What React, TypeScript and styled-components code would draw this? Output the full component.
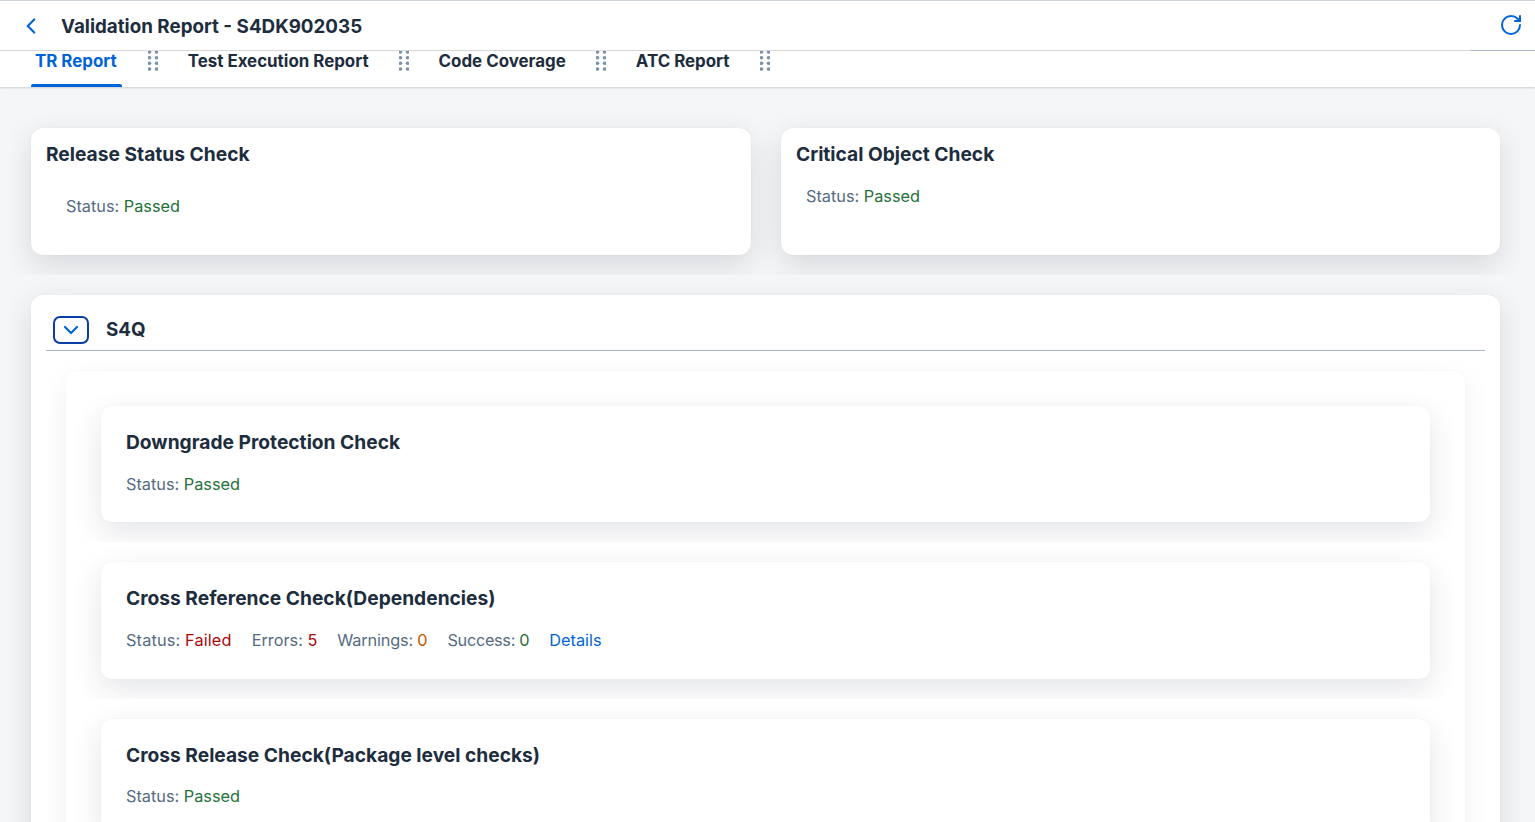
import React from "react";
import styled, { createGlobalStyle } from "styled-components";
import { ChevronDown, ChevronLeft, RotateCw } from "lucide-react";

const Global = createGlobalStyle`
  html, body { margin: 0; height: 100%; overflow: hidden; background: #f5f6f7; }
  body { font-family: Inter, "Noto Sans", Arial, sans-serif; color: #1d2d3e; }
  * { box-sizing: border-box; }
`;

const Page = styled.div`height: 822px; overflow: hidden; display: flex; flex-direction: column;`;

const Header = styled.header`
  position: relative;
  height: 51px;
  flex: none;
  background: #fff;
  border-top: 1px solid #ccd3d9;
  border-bottom: 1px solid #d9d9d9;
  display: flex;
  align-items: center;
  padding: 0 12px 0 18px;
  &::after {
    content: "";
    position: absolute;
    right: 0;
    bottom: -1px;
    width: 64px;
    height: 1px;
    background: #a9b8c9;
  }
`;
const BackButton = styled.span`width: 26px; display: flex; color: #0064d9; margin-right: 17px;`;
const Title = styled.h1`margin: 2px 0 0; flex: 1; font-size: 18.8px; line-height: 24px; font-weight: 700;`;
const Refresh = styled.span`display: flex; color: #0064d9; margin-bottom: 1px;`;

const TabBar = styled.nav`
  height: 36px;
  flex: none;
  background: #fff;
  box-shadow: 0 1px 2px rgba(29,45,62,.2);
  display: flex;
  gap: 26px;
  padding-left: 31px;
  position: relative;
  z-index: 2;
`;
const Tab = styled.div<{ $active?: boolean }>`
  position: relative;
  padding: 0 ${p => (p.$active ? 5 : 4)}px 0 4px;
  height: 36px;
  font-size: 16.9px;
  line-height: 20px;
  font-weight: 700;
  color: ${p => (p.$active ? "#0064d9" : "#1d2d3e")};
  ${p => p.$active && `
    &::after {
      content: "";
      position: absolute;
      left: 0;
      right: 0;
      bottom: 0;
      height: 3px;
      background: #0064d9;
      border-radius: 2px 2px 0 0;
    }
  `}
`;
const Grip = () => (
  <svg width="10" height="20" viewBox="0 0 10 20" fill="#7b91a8">
    {[1, 6.7, 12.3, 18].map(y => [1.5, 8.5].map(x => <circle key={`${x}-${y}`} cx={x} cy={y} r="1.8" />))}
  </svg>
);

const Content = styled.main`padding: 20.5px 15px 0 11px; flex: 1; display: flex; flex-direction: column;`;

const Clip = styled.div`overflow: hidden; padding: 20px;`;
const TopRow = styled(Clip)`display: grid; grid-template-columns: 720px 719px; gap: 30px;`;
const PanelClip = styled(Clip)`padding-bottom: 0; flex: 1;`;

const Card = styled.section`
  background: #fff;
  border-radius: 12px;
  box-shadow: 0 10px 30px rgba(29,45,62,.14), 0 0 1px rgba(29,45,62,.12);
`;
const TopCard = styled(Card)`height: 127.5px; padding: 14px 15px;`;
const TopTitle = styled.h2`margin: 0; font-size: 19.2px; line-height: 24px; font-weight: 700;`;
const StatusLine = styled.p<{ $left: number; $top: number }>`
  margin: ${p => p.$top}px 0 0 ${p => p.$left}px;
  font-size: 16.3px;
  line-height: 22px;
  color: #556b82;
  display: flex;
  gap: 20px;
`;
const Pair = styled.span<{ $tracking?: number }>`
  letter-spacing: ${p => p.$tracking ?? 0}px;
`;
const Value = styled.span<{ $tone: "good" | "bad" | "warn" }>`
  color: ${p => ({ good: "#256f3a", bad: "#aa0808", warn: "#c35500" }[p.$tone])};
`;
const DetailsLink = styled.a`color: #0064d9; text-decoration: none;`;

const Panel = styled(Card)`padding: 15px; min-height: 700px;`;
const PanelHead = styled.div`
  display: flex;
  align-items: center;
  height: 41px;
  padding: 0 0 0 7px;
  gap: 17px;
  border-bottom: 1px solid #a9b4be;
`;
const Toggle = styled.button`
  width: 36px;
  height: 28px;
  padding: 0;
  border: 2px solid #0a3ea5;
  border-radius: 7px;
  background: #fff;
  color: #0064d9;
  display: flex;
  align-items: center;
  justify-content: center;
`;
const PanelName = styled.h3`margin: 0; font-size: 18.8px; line-height: 24px; font-weight: 700;`;
const InnerClip = styled(Clip)`padding-bottom: 0;`;
const InnerPanel = styled.div`
  background: #fff;
  border-radius: 10px;
  box-shadow: 0 10px 30px rgba(29,45,62,.07), 0 0 1px rgba(29,45,62,.08);
  min-height: 520px;
`;
const CheckClip = styled(Clip)`padding: 35px 35px 20px;`;
const NextClip = styled(Clip)`padding: 20px 35px;`;
const CheckCard = styled.article`
  background: #fff;
  border-radius: 10px;
  height: 116.4px;
  padding: 24px 25px 0;
  box-shadow: 0 10px 30px rgba(29,45,62,.12), 0 0 1px rgba(29,45,62,.1);
`;
const CheckTitle = styled.h4`margin: 0; font-size: 19.2px; line-height: 24px; font-weight: 700;`;

export default function App() {
  return (
    <Page>
      <Global />
      <Header>
        <BackButton><ChevronLeft size={26} strokeWidth={2} /></BackButton>
        <Title>Validation Report - S4DK902035</Title>
        <Refresh><RotateCw size={24} strokeWidth={2} /></Refresh>
      </Header>
      <TabBar>
        <Tab $active>TR Report</Tab>
        <Grip />
        <Tab>Test Execution Report</Tab>
        <Grip />
        <Tab>Code Coverage</Tab>
        <Grip />
        <Tab>ATC Report</Tab>
        <Grip />
      </TabBar>
      <Content>
        <TopRow>
          <TopCard>
            <TopTitle>Release Status Check</TopTitle>
            <StatusLine $left={20} $top={29}><Pair>Status: <Value $tone="good">Passed</Value></Pair></StatusLine>
          </TopCard>
          <TopCard>
            <TopTitle>Critical Object Check</TopTitle>
            <StatusLine $left={10} $top={19}><Pair>Status: <Value $tone="good">Passed</Value></Pair></StatusLine>
          </TopCard>
        </TopRow>
        <PanelClip>
          <Panel>
            <PanelHead>
              <Toggle><ChevronDown size={24} strokeWidth={2.2} /></Toggle>
              <PanelName>S4Q</PanelName>
            </PanelHead>
            <InnerClip>
              <InnerPanel>
                <CheckClip>
                  <CheckCard>
                    <CheckTitle>Downgrade Protection Check</CheckTitle>
                    <StatusLine $left={0} $top={18.6}><Pair>Status: <Value $tone="good">Passed</Value></Pair></StatusLine>
                  </CheckCard>
                </CheckClip>
                <NextClip>
                  <CheckCard>
                    <CheckTitle>Cross Reference Check(Dependencies)</CheckTitle>
                    <StatusLine $left={0} $top={18.6}>
                      <Pair $tracking={0.15}>Status: <Value $tone="bad">Failed</Value></Pair>
                      <Pair>Errors: <Value $tone="bad">5</Value></Pair>
                      <Pair $tracking={-0.18}>Warnings: <Value $tone="warn">0</Value></Pair>
                      <Pair $tracking={-0.3}>Success: <Value $tone="good">0</Value></Pair>
                      <DetailsLink>Details</DetailsLink>
                    </StatusLine>
                  </CheckCard>
                </NextClip>
                <NextClip>
                  <CheckCard>
                    <CheckTitle>Cross Release Check(Package level checks)</CheckTitle>
                    <StatusLine $left={0} $top={18.6}><Pair>Status: <Value $tone="good">Passed</Value></Pair></StatusLine>
                  </CheckCard>
                </NextClip>
              </InnerPanel>
            </InnerClip>
          </Panel>
        </PanelClip>
      </Content>
    </Page>
  );
}
